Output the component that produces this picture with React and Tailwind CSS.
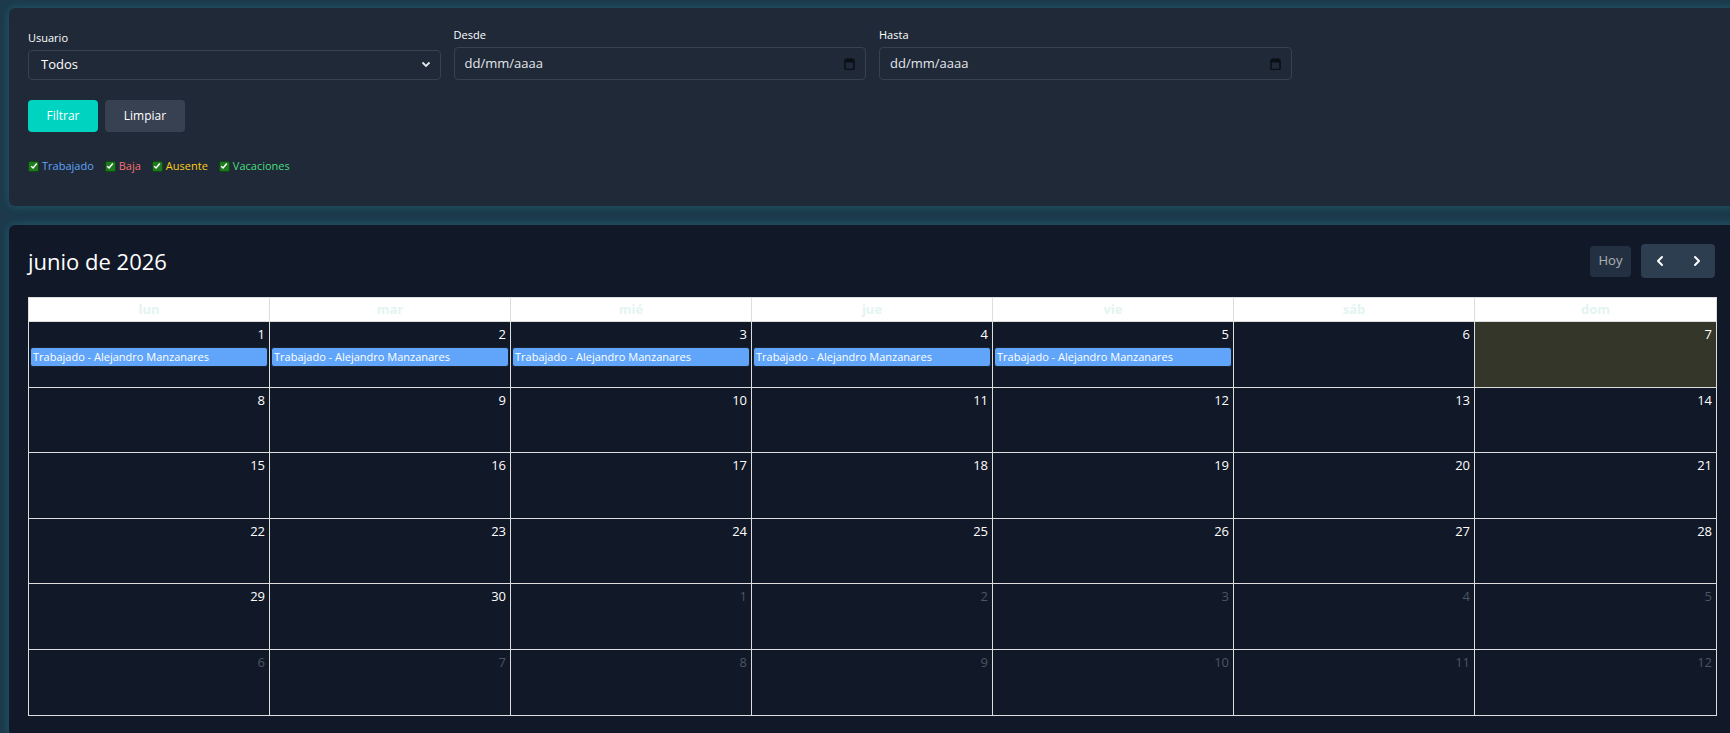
import { ChevronLeft, ChevronRight } from 'lucide-react';

const FONT = { fontFamily: '"Open Sans", "Noto Sans", "Liberation Sans", sans-serif' };

const dias = ['lun', 'mar', 'mié', 'jue', 'vie', 'sáb', 'dom'];

// 6 semanas visibles de junio 2026, empezando el lunes 1
const semanas = [
    [1, 2, 3, 4, 5, 6, 7],
    [8, 9, 10, 11, 12, 13, 14],
    [15, 16, 17, 18, 19, 20, 21],
    [22, 23, 24, 25, 26, 27, 28],
    [29, 30, 1, 2, 3, 4, 5],
    [6, 7, 8, 9, 10, 11, 12],
];

const filtros = [
    { label: 'Trabajado', color: 'text-[#60a5fa]' },
    { label: 'Baja', color: 'text-[#f87171]' },
    { label: 'Ausente', color: 'text-[#facc15]' },
    { label: 'Vacaciones', color: 'text-[#4ade80]' },
];

function CalendarIcon() {
    return (
        <svg width="11" height="12" viewBox="0 0 11 12" className="shrink-0">
            <rect x="1" y="1.5" width="9" height="10" rx="1" fill="none" stroke="#0b0f16" strokeWidth="1.6" />
            <rect x="1" y="1.5" width="9" height="3" fill="#0b0f16" />
            <rect x="3" y="0" width="1.4" height="2.5" fill="#0b0f16" />
            <rect x="6.6" y="0" width="1.4" height="2.5" fill="#0b0f16" />
        </svg>
    );
}

function DateField({ label }) {
    return (
        <div>
            <label className="block text-[11px] leading-[16px] text-white mb-[4px]">{label}</label>
            <div className="h-[33px] w-full bg-[#1f2937] border border-[#374151] rounded-[4px] px-[10px] flex items-center justify-between text-[13px] text-[#e5e7eb]">
                <span>dd/mm/aaaa</span>
                <CalendarIcon />
            </div>
        </div>
    );
}

function Check({ label, color }) {
    return (
        <label className="flex items-center gap-[3px] text-[11px] leading-[14px]">
            <span className="w-[11px] h-[11px] rounded-[2px] bg-[#1f7a1f] border border-[#0f4a0f] flex items-center justify-center">
                <svg width="8" height="8" viewBox="0 0 8 8">
                    <path d="M1.2 4.2 L3.1 6 L6.8 1.6" fill="none" stroke="white" strokeWidth="1.5" />
                </svg>
            </span>
            <span className={color}>{label}</span>
        </label>
    );
}

export default function App() {
    return (
        <div style={FONT} className="w-full min-h-[733px] overflow-hidden bg-[#1c3a4b] pt-[8px] pl-[9px]">
            {/* Filtros */}
            <div className="w-[1727px] bg-[#1f2937] rounded-[6px] shadow-[0_0_10px_rgba(45,190,210,0.25)] px-[19px] pt-[19px] pb-[33px]">
                <div className="grid grid-cols-4 gap-x-[13px] items-end">
                    <div>
                        <label className="block text-[11px] leading-[16px] text-white mb-[4px]">Usuario</label>
                        <div className="relative">
                            <select className="appearance-none h-[30px] w-full bg-[#1f2937] border border-[#374151] rounded-[4px] pl-[12px] text-[13px] text-white focus:outline-none">
                                <option>Todos</option>
                            </select>
                            <svg className="absolute right-[10px] top-[11px] pointer-events-none" width="10" height="7" viewBox="0 0 10 7">
                                <path d="M1.5 1.5 L5 5 L8.5 1.5" fill="none" stroke="#e5e7eb" strokeWidth="1.8" />
                            </svg>
                        </div>
                    </div>
                    <DateField label="Desde" />
                    <DateField label="Hasta" />
                    <div />
                </div>

                <div className="flex gap-[7px] mt-[20px]">
                    <button className="h-[32px] w-[70px] rounded-[4px] bg-[#00d4c0] text-white text-[12px]">Filtrar</button>
                    <button className="h-[32px] w-[80px] rounded-[4px] bg-[#374151] text-white text-[12px]">Limpiar</button>
                </div>

                <div className="flex gap-[11px] mt-[27px]">
                    {filtros.map(f => (
                        <Check key={f.label} label={f.label} color={f.color} />
                    ))}
                </div>
            </div>

            {/* Calendario */}
            <div className="w-[1727px] mt-[19px] bg-[#111827] rounded-[6px] shadow-[0_0_10px_rgba(45,190,210,0.25)] px-[19px] pt-[19px] pb-[20px]">
                <div className="flex items-center justify-between h-[34px] mb-[19px] pr-[2px]">
                    <h2 className="text-[22px] text-white leading-[30px]">junio de 2026</h2>
                    <div className="flex items-center gap-[10px]">
                        <button className="h-[31px] w-[41px] rounded-[4px] bg-[#2c3e50] opacity-65 text-white text-[13px]">Hoy</button>
                        <div className="flex h-[34px] rounded-[4px] bg-[#2c3e50] overflow-hidden">
                            <button className="w-[37px] flex items-center justify-center text-white">
                                <ChevronLeft size={16} strokeWidth={3} />
                            </button>
                            <button className="w-[37px] flex items-center justify-center text-white">
                                <ChevronRight size={16} strokeWidth={3} />
                            </button>
                        </div>
                    </div>
                </div>

                <div className="w-[1689px] border border-[#dddddd]">
                    <div className="grid grid-cols-7 bg-white h-[23px]">
                        {dias.map((d, i) => (
                            <div key={d} className={`flex items-center justify-center text-[13px] font-bold text-[#e3f4f1] ${i < 6 ? 'border-r border-[#dddddd]' : ''}`}>
                                {d}
                            </div>
                        ))}
                    </div>
                    {semanas.map((sem, w) => (
                        <div key={w} className="grid grid-cols-7 h-[65.6px] border-t border-[#dddddd]">
                            {sem.map((n, i) => {
                                const otroMes = (w === 4 && i >= 2) || w === 5;
                                const hoy = w === 0 && i === 6;
                                const evento = w === 0 && i < 5;
                                return (
                                    <div key={i} className={`flex flex-col ${i < 6 ? 'border-r border-[#dddddd]' : ''} ${hoy ? 'bg-[#35362a]' : 'bg-[#111827]'}`}>
                                        <div className={`text-right text-[13px] leading-[18px] pt-[3px] pr-[4px] ${otroMes ? 'text-[#4b5563]' : 'text-white'}`}>
                                            {n}
                                        </div>
                                        {evento && (
                                            <div className="mx-[1px] mt-[4px] h-[20px] rounded-[3px] bg-[#60a5fa] border border-[#1a2433] px-[2px] text-[11px] leading-[18px] text-white truncate">
                                                Trabajado - Alejandro Manzanares
                                            </div>
                                        )}
                                    </div>
                                );
                            })}
                        </div>
                    ))}
                </div>
            </div>
        </div>
    );
}
